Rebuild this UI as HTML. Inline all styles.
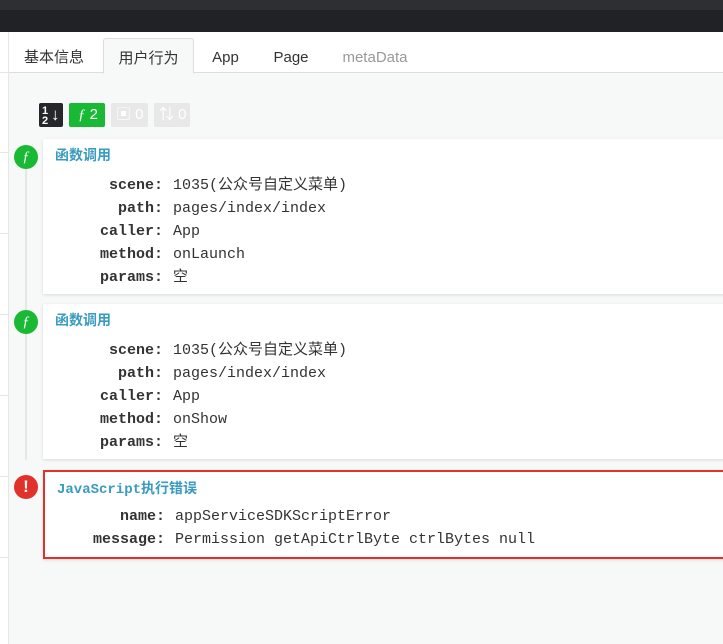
<!DOCTYPE html>
<html><head><meta charset="utf-8"><style>
*{margin:0;padding:0;box-sizing:border-box}
body{width:723px;height:644px;overflow:hidden;background:#f7f8f8;font-family:"Liberation Sans","Noto Sans CJK SC",sans-serif;position:relative}
.t1{position:absolute;left:0;top:0;width:723px;height:10px;background:#2e2f33}
.t2{position:absolute;left:0;top:10px;width:723px;height:22px;background:#212225}
.left{position:absolute;left:0;top:32px;width:9px;height:612px;background:#fff;border-right:1px solid #e6e6e6}
.hl{position:absolute;left:0;width:9px;height:1px;background:#e6e6e6}
.tabs{position:absolute;left:9px;top:32px;width:714px;height:41px;background:#fff;border-bottom:1px solid #ddd}
.tab{position:absolute;top:6px;height:35px;line-height:40px;font-size:15px;color:#333;text-align:center}
.tab.act{border:1px solid #ddd;border-bottom:1px solid #f7f8f8;background:#f7f8f8;border-radius:3px 3px 0 0;height:36px}
.badge{position:absolute;top:103px;height:24px;border-radius:2px;font-size:15px;line-height:24px;color:#fff}
.vline{position:absolute;left:25px;top:160px;width:2px;height:300px;background:#e6e6e6}
.dot{position:absolute;left:14px;width:24px;height:24px;border-radius:50%;background:#1ab934;color:#fff;text-align:center;font:italic 15px/24px "Liberation Serif",serif}
.card{position:absolute;left:43px;width:690px;background:#fff;box-shadow:0 1px 3px rgba(0,0,0,.12)}
.title{position:absolute;left:12px;top:6px;font-size:14px;color:#3a9bc1;font-weight:bold}
.row{position:absolute;font:15px/20px "Liberation Mono","Noto Sans CJK SC",monospace;color:#333;white-space:nowrap}
.row b{display:inline-block;text-align:right;width:120px;margin-right:10px}
</style></head><body>
<div class="t1"></div><div class="t2"></div>
<div class="left"></div>
<div class="hl" style="top:72px"></div><div class="hl" style="top:152px"></div><div class="hl" style="top:233px"></div><div class="hl" style="top:314px"></div><div class="hl" style="top:395px"></div><div class="hl" style="top:476px"></div><div class="hl" style="top:557px"></div>
<div class="tabs">
<div class="tab" style="left:6px;width:78px">基本信息</div>
<div class="tab act" style="left:94px;width:91px">用户行为</div>
<div class="tab" style="left:190px;width:53px">App</div>
<div class="tab" style="left:253px;width:58px">Page</div>
<div class="tab" style="left:322px;width:88px;color:#999">metaData</div>
</div>
<div class="badge" style="left:39px;width:24px;background:#25272a;font-size:11px;line-height:10px;padding:3px 0 0 3px;font-weight:bold">1<br>2<span style="position:absolute;left:12px;top:2px;font-size:17px;line-height:20px">↓</span></div>
<div class="badge" style="left:69px;width:36px;background:#1ab934;padding-left:9px"><i style="font-family:'Liberation Serif'">ƒ</i> 2</div>
<div class="badge" style="left:111px;width:37px;background:#e8e8e8;padding-left:5px">▣ 0</div>
<div class="badge" style="left:154px;width:36px;background:#e8e8e8;padding-left:5px">⇅ 0</div>
<div class="vline"></div>

<div class="dot" style="top:145px">ƒ</div>
<div class="card" style="top:139px;height:155px">
<div class="title">函数调用</div>
<div class="row" style="left:0px;top:37px"><b>scene:</b>1035(公众号自定义菜单)</div>
<div class="row" style="left:0px;top:60px"><b>path:</b>pages/index/index</div>
<div class="row" style="left:0px;top:83px"><b>caller:</b>App</div>
<div class="row" style="left:0px;top:106px"><b>method:</b>onLaunch</div>
<div class="row" style="left:0px;top:129px"><b>params:</b>空</div>
</div>

<div class="dot" style="top:310px">ƒ</div>
<div class="card" style="top:304px;height:155px">
<div class="title">函数调用</div>
<div class="row" style="left:0px;top:37px"><b>scene:</b>1035(公众号自定义菜单)</div>
<div class="row" style="left:0px;top:60px"><b>path:</b>pages/index/index</div>
<div class="row" style="left:0px;top:83px"><b>caller:</b>App</div>
<div class="row" style="left:0px;top:106px"><b>method:</b>onShow</div>
<div class="row" style="left:0px;top:129px"><b>params:</b>空</div>
</div>

<div class="dot" style="top:475px;background:#e0312b;font:bold 17px/24px 'Liberation Sans',sans-serif">!</div>
<div class="card" style="top:470px;height:89px;border:2px solid #e0312b">
<div class="title" style="top:6px;font-family:'Liberation Mono','Noto Sans CJK SC',monospace;font-size:14px">JavaScript执行错误</div>
<div class="row" style="left:0px;top:35px"><b>name:</b>appServiceSDKScriptError</div>
<div class="row" style="left:0px;top:58px"><b>message:</b>Permission getApiCtrlByte ctrlBytes null</div>
</div>
</body></html>
